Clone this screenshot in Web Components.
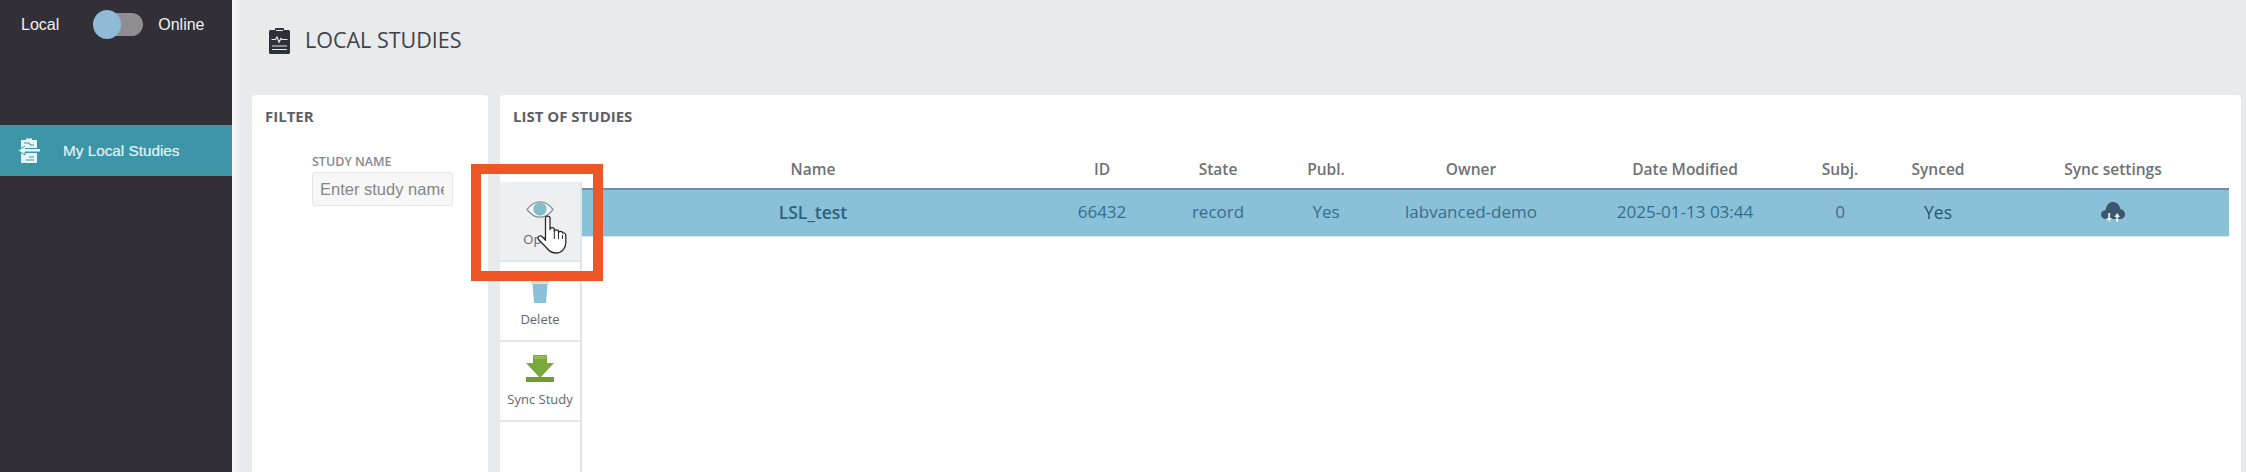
<!DOCTYPE html>
<html>
<head>
<meta charset="utf-8">
<title>Local Studies</title>
<style>
  html, body { margin: 0; height: 100%; overflow: hidden; background: #e9eaec; }
</style>
</head>
<body>
<ls-app></ls-app>

<script>
const ICONS = {
  board: `<svg width="21" height="26" viewBox="0 0 21 26"><path fill="#2e3138" d="M1.5 2H6V.8C6 .3 6.3 0 6.8 0h7.4c.5 0 .8.3.8.8V2h4.500c.8 0 1.500.7 1.500 1.500v21c0 .8-.7 1.500-1.500 1.500h-18C.7 26 0 25.3 0 24.5v-21C0 2.700.7 2 1.500 2z"/><path fill="none" stroke="#e9eaec" stroke-width="1" d="M7 2.5h7"/><path fill="none" stroke="#e9eaec" stroke-width="1.2" d="M2.5 11.5h4l1.500-2.500 2 5 2-3.500 1 1h5.500M3 18h15M3 21.5h15"/></svg>`,
  stack: `<svg width="22" height="25" viewBox="0 0 22 25"><g fill="#e8f5f8"><path d="M4 2h4V.5h6V2h4c.6 0 1 .4 1 1v7H3V3c0-.6.4-1 1-1z"/><path d="M3 15h16v9c0 .6-.4 1-1 1H4c-.6 0-1-.4-1-1z"/><path d="M0 12.5 7 8v3h15v3H7v3z"/></g><path fill="none" stroke="#3d96a8" stroke-width="1.2" d="M6 5h5l1.500 2H16M11 19h5M8 22h8"/><path fill="none" stroke="#3d96a8" stroke-width="1" d="M7 8 0 12.5 7 17v-3h15"/></svg>`,
  eye: `<svg width="28" height="17" viewBox="0 0 28 17"><path fill="#f4f5f6" stroke="#8b9599" stroke-width="1.3" d="M1 8.5C5 3 9 .8 14 .8S23 3 27 8.5c-4 5.500-8 7.700-13 7.700S5 14 1 8.5z"/><circle cx="14" cy="8" r="6.6" fill="#85bccb"/></svg>`,
  trash: `<svg width="18" height="22" viewBox="0 0 18 22"><path fill="#f3d9cf" d="M0 0h18v3H0z"/><path fill="#8bc0d9" d="M1.5 3h15L15 22H3z"/></svg>`,
  sync: `<svg width="28" height="27" viewBox="0 0 28 27"><path fill="#7aa83c" d="M7 0h14v8h7L14 23 0 8h7z"/><path fill="#6f9c33" d="M0 22h28v5H0z"/><path fill="#8ebb52" d="M8 1h12v3H8z"/></svg>`,
  cloud: `<svg width="24" height="22" viewBox="0 0 24 22"><path fill="#3f566f" d="M5 18C2 18 0 16 0 13.5 0 11 2 9.2 4.5 9.2 5.5 3.500 8.500 1 12 1c3.500 0 6.500 2.300 7.300 7C22 8.200 24 10.500 24 13.200 24 16 22 18 19 18z"/><path fill="#e8f1f5" d="M7.3 12h1.800v5h1.900l-2.800 3.800L5.400 17h1.900z"/><path fill="#e8f1f5" d="M15.3 21v-5h-1.900l2.800-4 2.800 4h-1.900v5z"/></svg>`,
  hand: `<svg width="30" height="39" viewBox="0 0 30 39"><path fill="#fff" stroke="#2a2a2a" stroke-width="1.3" stroke-linejoin="round" d="M8.5 3c0-2.600 4.500-2.600 4.500 0v11.500c0-2.500 4.300-2.500 4.300 0v2c0-2.300 4.200-2.300 4.200 0v1.500c0-2.200 4-2.200 4 0 1.500-.6 3.300.5 3.300 2.500v7c0 5.500-4 10.500-9.500 10.500-4.500 0-7-1.500-9.500-5L1.500 24.500c-1.700-3 1.800-5 4-2.500l3 3.200z"/><path fill="none" stroke="#2a2a2a" stroke-width="1" d="M17.3 16.500V24M21.500 18v6M25.500 20v4"/></svg>`
}

class LsToggle extends HTMLElement {
  constructor() {
    super()
    this.attachShadow({mode: 'open'}).innerHTML = `
      <style>
        :host { display: flex; align-items: center; height: 29px; padding: 10px 0 0 21px; color: #f1f1f3; font: 16px "Liberation Sans", sans-serif; }
        .track { position: relative; width: 50px; height: 23px; margin: 0 15px 0 34px; }
        .track::before { content: ""; display: block; margin-left: 12px; height: 23px; border-radius: 12px; background: #8f8d92; }
        .thumb { position: absolute; left: 0; top: -3px; width: 28px; height: 29px; border-radius: 50%; background: #8fbbd6; }
      </style>
      <span>Local</span><div class="track"><div class="thumb"></div></div><span>Online</span>`
  }
}
customElements.define('ls-toggle', LsToggle)

class LsNavItem extends HTMLElement {
  constructor() {
    super()
    this.attachShadow({mode: 'open'}).innerHTML = `
      <style>
        :host { display: flex; align-items: center; height: 51px; padding-left: 18px; gap: 23px; background: #3d96a8; color: #e4f3f6; font: 15.3px "Liberation Sans", sans-serif; -webkit-text-stroke: .2px #e4f3f6; }
        svg { display: block; }
      </style>
      ${ICONS.stack}<slot></slot>`
  }
}
customElements.define('ls-nav-item', LsNavItem)

class LsSidebar extends HTMLElement {
  constructor() {
    super()
    this.attachShadow({mode: 'open'}).innerHTML = `
      <style>
        :host { display: block; background: #322f37; }
        ls-nav-item { margin-top: 86px; }
      </style>
      <ls-toggle></ls-toggle>
      <ls-nav-item>My Local Studies</ls-nav-item>`
  }
}
customElements.define('ls-sidebar', LsSidebar)

class LsCard extends HTMLElement {
  constructor() {
    super()
    this.attachShadow({mode: 'open'}).innerHTML = `
      <style>
        :host { display: block; position: relative; background: #fff; border-radius: 4px 4px 0 0; padding: 12px 12px 0 13px; font-family: "Open Sans", sans-serif; }
        h3 { margin: 0 0 1px; font-size: 15px; line-height: 18px; font-weight: 700; color: #5b5f69; }
      </style>
      <h3>${this.getAttribute('heading')}</h3>
      <slot></slot>`
  }
}
customElements.define('ls-card', LsCard)

class LsFilter extends HTMLElement {
  constructor() {
    super()
    this.attachShadow({mode: 'open'}).innerHTML = `
      <style>
        :host { display: block; margin: 29px 0 0 47px; font-family: "Open Sans", sans-serif; }
        label { display: block; font-size: 12.5px; line-height: 16px; font-weight: 600; color: #85888e; margin-bottom: 2px; }
        input { display: block; box-sizing: border-box; width: 141px; height: 34px; padding: 0 8px 0 7px; border: 1px solid #e6e6e6; border-radius: 3px; background: #f7f7f7; font: 16.5px "Liberation Sans", sans-serif; outline: none; }
        input::placeholder { color: #868686; opacity: 1; }
      </style>
      <label>STUDY NAME</label>
      <input type="text" placeholder="Enter study name">`
  }
}
customElements.define('ls-filter', LsFilter)

const COLUMNS = '468px 110px 122px 94px 196px 232px 78px 118px 232px'

class LsTable extends HTMLElement {
  constructor() {
    super()
    const head = ['Name', 'ID', 'State', 'Publ.', 'Owner', 'Date Modified', 'Subj.', 'Synced', 'Sync settings']
    const row = ['LSL_test', '66432', 'record', 'Yes', 'labvanced-demo', '2025-01-13 03:44', '0', 'Yes', ICONS.cloud]
    this.attachShadow({mode: 'open'}).innerHTML = `
      <style>
        :host { display: block; margin: 27px 0 0 66px; width: 1650px; font-family: "Open Sans", sans-serif; }
        .head, .row { display: grid; grid-template-columns: ${COLUMNS}; text-align: center; align-items: center; }
        .head { height: 36px; padding-bottom: 2px; box-sizing: border-box; font-size: 15.5px; font-weight: 600; color: #6e7176; }
        .row { box-sizing: border-box; height: 47.5px; border-top: 2px solid #6f8fac; background: #8bc0d9; font-size: 17px; color: #356f8e; box-shadow: 0 1px 0 #d5e6ec; }
        .row div { margin-top: -2px; }
        .row div:first-child { font-weight: 600; color: #2c6380; font-size: 17.5px; }
        .row div:nth-child(8) { font-weight: 500; color: #1f5c70; font-size: 17.5px; }
        svg { display: block; margin: 0 auto; }
      </style>
      <div class="head">${head.map(h => `<div>${h}</div>`).join('')}</div>
      <div class="row">${row.map(c => `<div>${c}</div>`).join('')}</div>`
  }
}
customElements.define('ls-table', LsTable)

class LsMenuItem extends HTMLElement {
  constructor() {
    super()
    this.attachShadow({mode: 'open'}).innerHTML = `
      <style>
        :host { display: flex; flex-direction: column; align-items: center; box-sizing: border-box; height: 80px; border-bottom: 2px solid #e4e5e7; font: 13px "Open Sans", sans-serif; color: #63666b; }
        :host([active]) { background: #eeeff1; }
        .icon { height: 41px; display: flex; align-items: flex-end; justify-content: center; }
        .label { margin-top: 8px; line-height: 16px; white-space: nowrap; }
      </style>
      <div class="icon"><slot name="icon"></slot></div>
      <div class="label"><slot></slot></div>`
  }
}
customElements.define('ls-menu-item', LsMenuItem)

class LsContextMenu extends HTMLElement {
  constructor() {
    super()
    this.attachShadow({mode: 'open'}).innerHTML = `
      <style>
        :host { position: absolute; left: 0; top: 87px; bottom: 0; width: 80px; border-right: 2px solid #e3e4e6; background: #fff; }
        ls-menu-item:first-child { width: 82px; }
        span { display: block; }
        span svg { display: block; }
        .up5 { margin-bottom: 5px; }
        .up1 { margin-bottom: 1px; }
        .cursor { position: absolute; left: 37px; top: 33px; line-height: 0; }
      </style>
      <ls-menu-item active><span slot="icon" class="up5">${ICONS.eye}</span>Open</ls-menu-item>
      <ls-menu-item><span slot="icon">${ICONS.trash}</span>Delete</ls-menu-item>
      <ls-menu-item><span slot="icon" class="up1">${ICONS.sync}</span>Sync Study</ls-menu-item>
      <div class="cursor">${ICONS.hand}</div>`
  }
}
customElements.define('ls-context-menu', LsContextMenu)

class LsHighlight extends HTMLElement {
  constructor() {
    super()
    this.attachShadow({mode: 'open'}).innerHTML = `
      <style>
        :host { position: absolute; left: 471px; top: 164px; width: 132px; height: 117px; box-sizing: border-box; border: 10px solid #ee5527; }
      </style>`
  }
}
customElements.define('ls-highlight', LsHighlight)

class LsApp extends HTMLElement {
  constructor() {
    super()
    this.attachShadow({mode: 'open'}).innerHTML = `
      <style>
        :host { display: grid; grid-template-columns: 232px 1fr; height: 472px; position: relative; overflow: hidden; }
        main { display: flex; flex-direction: column; min-width: 0; padding: 0 5px 0 20px; background: linear-gradient(90deg, #f7f8f9 0, #e9eaec 9px); }
        header { display: flex; align-items: center; gap: 15px; height: 95px; box-sizing: border-box; padding: 0 0 17px 17px; color: #3f444c; font: 21.5px "Open Sans", sans-serif; }
        header svg { display: block; margin-top: 4px; }
        .cards { flex: 1; display: grid; grid-template-columns: 236px 1fr; gap: 12px; }
      </style>
      <ls-sidebar></ls-sidebar>
      <main>
        <header>${ICONS.board}<span>LOCAL STUDIES</span></header>
        <div class="cards">
          <ls-card heading="FILTER"><ls-filter></ls-filter></ls-card>
          <ls-card heading="LIST OF STUDIES">
            <ls-table></ls-table>
            <ls-context-menu></ls-context-menu>
          </ls-card>
        </div>
      </main>
      <ls-highlight></ls-highlight>`
  }
}
customElements.define('ls-app', LsApp)
</script>
</body>
</html>
